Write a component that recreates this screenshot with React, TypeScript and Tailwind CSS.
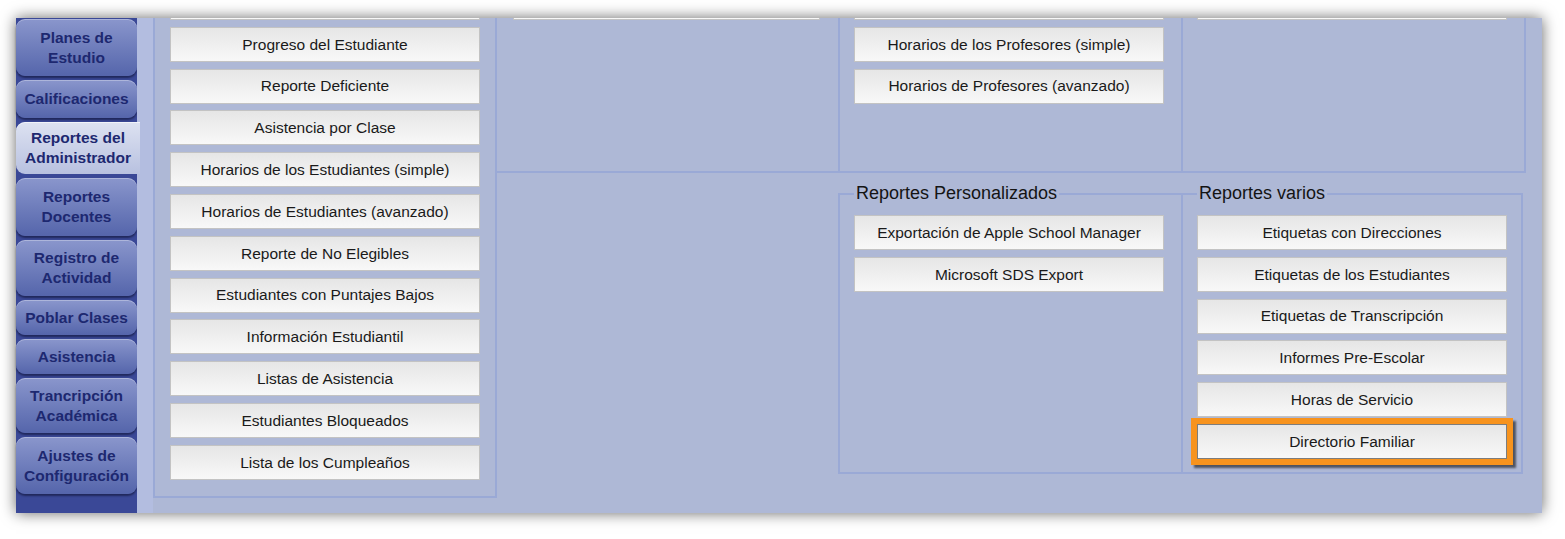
import clsx from "clsx";

type Tab = { lines: string[]; h: string; active?: boolean };

const tabs: Tab[] = [
  { lines: ["Planes de", "Estudio"], h: "h-[57px]" },
  { lines: ["Calificaciones"], h: "h-[38px]" },
  { lines: ["Reportes del", "Administrador"], h: "h-[52px]", active: true },
  { lines: ["Reportes", "Docentes"], h: "h-[58px]" },
  { lines: ["Registro de", "Actividad"], h: "h-[56px]" },
  { lines: ["Poblar Clases"], h: "h-[35px]" },
  { lines: ["Asistencia"], h: "h-[35px]" },
  { lines: ["Trancripción", "Académica"], h: "h-[55px]" },
  { lines: ["Ajustes de", "Configuración"], h: "h-[57px]" },
];

const adminReports = [
  "",
  "Progreso del Estudiante",
  "Reporte Deficiente",
  "Asistencia por Clase",
  "Horarios de los Estudiantes (simple)",
  "Horarios de Estudiantes (avanzado)",
  "Reporte de No Elegibles",
  "Estudiantes con Puntajes Bajos",
  "Información Estudiantil",
  "Listas de Asistencia",
  "Estudiantes Bloqueados",
  "Lista de los Cumpleaños",
];

const teacherSchedules = ["", "Horarios de los Profesores (simple)", "Horarios de Profesores (avanzado)"];

const custom = ["Exportación de Apple School Manager", "Microsoft SDS Export"];

const misc = [
  "Etiquetas con Direcciones",
  "Etiquetas de los Estudiantes",
  "Etiquetas de Transcripción",
  "Informes Pre-Escolar",
  "Horas de Servicio",
];

function ReportButton({ label, hot }: { label: string; hot?: boolean }) {
  return (
    <button
      type="button"
      className={clsx(
        "flex h-[35px] w-full shrink-0 items-center justify-center border bg-linear-to-b from-[#e6e6e6] to-[#f8f8f8] text-[15.5px] text-[#1a1a1a]",
        hot
          ? "relative z-10 border-[#7d7d7d] shadow-[0_0_0_6px_#f7931e,3px_3px_2px_6px_rgba(0,0,0,0.55)]"
          : "border-[#c3c3c3]"
      )}
    >
      {label}
    </button>
  );
}

function TopBox({ items, pad }: { items: string[]; pad: string }) {
  return (
    <div
      className={clsx(
        "flex h-[203px] w-[343px] flex-col gap-[6.8px] border-r-2 border-b-2 border-[#9aa9d6] pt-[15px]",
        pad
      )}
    >
      {items.map((t, i) => (
        <ReportButton key={i} label={t} />
      ))}
    </div>
  );
}

export default function App() {
  return (
    <div className="h-[539px] w-[1565px] overflow-hidden bg-white pt-[18px] pl-[16px] font-['Liberation_Sans',Arial,sans-serif]">
      <div className="flex h-[495px] w-[1526px] shadow-[0_0_14px_rgba(0,0,0,0.6)]">
        {/* side tabs */}
        <div className="flex w-[121px] shrink-0 flex-col gap-[4px] bg-[#3a4897] pt-[1px]">
          {tabs.map((t) => (
            <div
              key={t.lines.join(" ")}
              className={clsx(
                "flex flex-col items-center justify-center text-center text-[15.5px] leading-[20px] font-bold text-[#1d2870]",
                t.h,
                t.active
                  ? "relative z-10 w-[124px] rounded-l-[9px] bg-linear-to-b from-[#dde2f1] to-[#b8c1e0] shadow-[inset_0_1px_0_rgba(255,255,255,0.6)]"
                  : "w-[121px] rounded-[9px] bg-linear-to-b from-[#8a96cc] to-[#5565ab] shadow-[inset_0_1px_0_rgba(255,255,255,0.3),0_2px_2px_rgba(0,0,20,0.45)]"
              )}
            >
              {t.lines.map((l) => (
                <span key={l}>{l}</span>
              ))}
            </div>
          ))}
        </div>
        <div className="w-[16px] shrink-0 bg-[#b3bde0]" />

        {/* reports area */}
        <div className="relative flex-1 overflow-hidden bg-[#aeb8d6]">
          <div className="-mt-[48px] flex items-start">
            <div className="flex w-[344px] shrink-0 flex-col gap-[6.8px] border-x-2 border-b-2 border-[#9aa9d6] px-[15px] pt-[15px] pb-[16px]">
              {adminReports.map((t, i) => (
                <ReportButton key={i} label={t} />
              ))}
            </div>

            <div className="flex flex-col">
              <div className="flex">
                <TopBox items={[""]} pad="pl-[16px] pr-[18px]" />
                <TopBox items={teacherSchedules} pad="pl-[14px] pr-[17px]" />
                <TopBox items={[""]} pad="pl-[14px] pr-[17px]" />
              </div>

              <div className="flex items-stretch">
                <div className="w-[341px] shrink-0" />
                <fieldset className="mt-[10px] w-[343px] shrink-0 border-2 border-r-0 border-[#9aa9d6] pr-[17px] pb-[13px] pl-[14px]">
                  <legend className="px-[2px] text-[18px] leading-[21px] text-[#141414]">
                    Reportes Personalizados
                  </legend>
                  <div className="flex flex-col gap-[6.8px] pt-[11px]">
                    {custom.map((t) => (
                      <ReportButton key={t} label={t} />
                    ))}
                  </div>
                </fieldset>
                <fieldset className="mt-[10px] w-[342px] shrink-0 border-2 border-[#9aa9d6] px-[14px] pb-[13px]">
                  <legend className="px-[2px] text-[18px] leading-[21px] text-[#141414]">
                    Reportes varios
                  </legend>
                  <div className="flex flex-col gap-[6.8px] pt-[11px]">
                    {misc.map((t) => (
                      <ReportButton key={t} label={t} />
                    ))}
                    <ReportButton label="Directorio Familiar" hot />
                  </div>
                </fieldset>
              </div>
            </div>
          </div>
        </div>
      </div>
    </div>
  );
}
